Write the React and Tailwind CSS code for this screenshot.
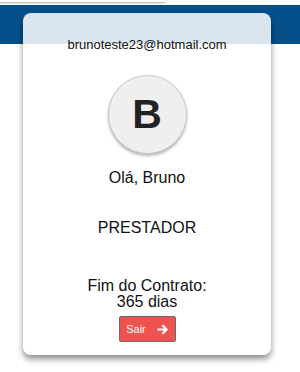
import React from 'react';

export default function App() {
  return (
    <div className="w-[300px] h-[372px] bg-white overflow-hidden" style={{ fontFamily: '"Liberation Sans", Arial, sans-serif' }}>
      {/* top strip with faint shadow */}
      <div className="h-[5px] bg-white relative">
        <div className="w-[165px] h-[2px] bg-white shadow-[0_1px_2px_rgba(0,0,0,0.35)]" />
      </div>
      {/* header bar */}
      <div className="h-[39px] bg-[#054f8b]" />

      {/* profile card */}
      <div className="relative -mt-[31px] ml-[23px] w-[248px] rounded-[8px] bg-white/85 shadow-[0_4px_6px_rgba(0,0,0,0.45)] flex flex-col items-center pt-[24px] pb-[13px] text-[#111]">
        <p className="text-[13px] leading-[15px]">brunoteste23@hotmail.com</p>

        <div className="mt-[23px] w-[79px] h-[79px] rounded-full bg-[#efefef] border border-[#c9c9c9] shadow-[0_2px_3px_rgba(0,0,0,0.3)] flex items-center justify-center">
          <span className="text-[41px] font-bold text-[#222] leading-none">B</span>
        </div>

        <p className="mt-[15px] text-[16px] leading-[18px]">Olá, Bruno</p>

        <p className="mt-[32px] text-[16px] leading-[18px]">PRESTADOR</p>

        <div className="mt-[41px] text-[16px] leading-[16px] text-center">
          <p>Fim do Contrato:</p>
          <p>365 dias</p>
        </div>

        <button className="mt-[6px] w-[57px] h-[26px] rounded-[2px] bg-[#ef5350] border border-[#6b6b6b] flex items-center justify-center gap-[11px] text-white text-[11px]">
          <span>Sair</span>
          <svg width="11" height="11" viewBox="0 0 12 12" fill="none" stroke="white" strokeWidth="2.4" strokeLinecap="round" strokeLinejoin="round">
            <path d="M1.5 6h8.5M6.5 2l4 4-4 4" />
          </svg>
        </button>
      </div>
    </div>
  );
}
